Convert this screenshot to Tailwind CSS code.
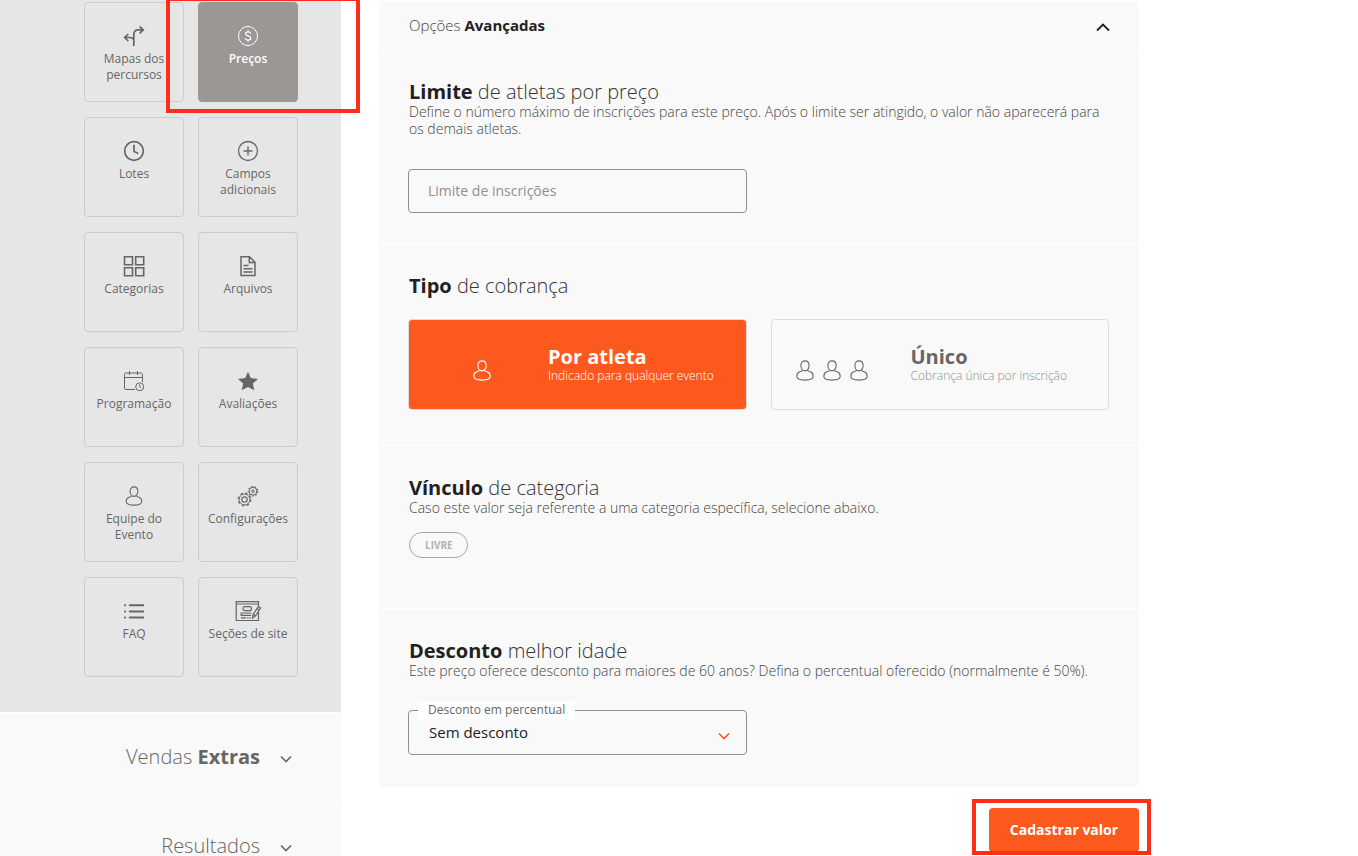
<!DOCTYPE html>
<html lang="pt-BR">
<head>
<meta charset="utf-8">
<meta name="viewport" content="width=device-width, initial-scale=1">
<title>Preços do evento</title>
<script src="https://cdn.jsdelivr.net/npm/@tailwindcss/browser@4"></script>
</head>
<body class="bg-white font-['Open_Sans',sans-serif] text-[#212121]">
<svg class="hidden" aria-hidden="true">
  <symbol id="person" viewBox="0 0 18 21">
    <g fill="none" stroke="currentColor" stroke-width="1.100">
      <path d="M9 .9c2.500 0 4.100 1.800 4.100 4.600 0 3-1.800 5.400-4.100 5.400S4.900 8.500 4.900 5.500C4.900 2.700 6.500.9 9 .9z"/>
      <path d="M6.600 10.200c-.5.9-1.500 1.200-2.800 1.600C1.700 12.500.8 14 .8 16.300c0 2.600 3.200 3.800 8.200 3.800s8.200-1.200 8.200-3.800c0-2.300-.9-3.800-3-4.500-1.300-.4-2.300-.7-2.800-1.600"/>
    </g>
  </symbol>
  <symbol id="chevron" viewBox="0 0 12 8">
    <path d="M1 1.500l5 5 5-5" fill="none" stroke="currentColor" stroke-width="1.600"/>
  </symbol>
</svg>
<div class="flex h-screen items-start overflow-hidden">
  <aside class="w-[341px] shrink-0">
    <nav class="grid grid-cols-[100px_100px] justify-end gap-x-3.5 gap-y-[15px] bg-[#e6e6e6] pt-0.5 pr-[43px] pb-[35px] text-center text-xs leading-4 text-[#666]">
      <a href="#" class="flex h-[100px] flex-col items-center gap-[5px] rounded border border-[#ccc] pt-[23px]">
        <svg class="size-5 shrink-0 overflow-visible" viewBox="0 0 20 20" fill="none" stroke="currentColor" stroke-width="1.700"><path d="M9.800 20V8.500c0-3 1.500-4.600 4.500-4.600h5M15.600.5l3.700 3.400-3.700 3.500M9.800 13.800c-.5-1.600-1.800-2.300-4-2.300H.8M4.300 8L.6 11.500 4.300 15"/></svg>
        <span>Mapas dos<br>percursos</span>
      </a>
      <a href="#" aria-current="page" class="relative flex h-[100px] flex-col items-center gap-[5px] rounded border border-[#9a9795] bg-[#9a9795] pt-[23px] font-semibold text-white">
        <svg class="size-5 shrink-0 overflow-visible" viewBox="0 0 20 20" fill="none" stroke="currentColor"><circle cx="10" cy="10" r="9.500"/><path stroke-width="1.200" d="M12.700 7.600C12.500 6.500 11.500 5.900 10.100 5.900c-1.500 0-2.600.7-2.600 1.900 0 1.300 1.200 1.700 2.600 2.100 1.500.4 2.700.9 2.700 2.200s-1.200 2-2.700 2-2.700-.7-2.800-1.900M10.100 4.300v1.600M10.100 14.100v1.600"/></svg>
        <span>Preços</span>
        <span class="pointer-events-none absolute -top-1.5 -left-[33px] z-10 h-[116px] w-[194px] border-4 border-[#ff2d1c]"></span>
      </a>
      <a href="#" class="flex h-[100px] flex-col items-center gap-[5px] rounded border border-[#ccc] pt-[23px]">
        <svg class="size-5 shrink-0 overflow-visible" viewBox="0 0 20 20" fill="none" stroke="currentColor" stroke-width="1.700"><circle cx="10" cy="10" r="9.300"/><path d="M10 3.800v6.600l4.300 2.100"/></svg>
        <span>Lotes</span>
      </a>
      <a href="#" class="flex h-[100px] flex-col items-center gap-[5px] rounded border border-[#ccc] pt-[23px]">
        <svg class="size-5 shrink-0 overflow-visible" viewBox="0 0 20 20" fill="none" stroke="currentColor" stroke-width="1.300"><circle cx="10" cy="10" r="9.500"/><path d="M5.600 10h8.800M10 5.600v8.800"/></svg>
        <span>Campos<br>adicionais</span>
      </a>
      <a href="#" class="flex h-[100px] flex-col items-center gap-[5px] rounded border border-[#ccc] pt-[23px]">
        <svg class="size-5 shrink-0 overflow-visible" viewBox="0 0 20 20" fill="none" stroke="currentColor" stroke-width="1.600"><path d="M.5.700h8v8h-8zM11.700.700h8v8h-8zM.5 11.700h8v8h-8zM11.700 11.700h8v8h-8z"/></svg>
        <span>Categorias</span>
      </a>
      <a href="#" class="flex h-[100px] flex-col items-center gap-[5px] rounded border border-[#ccc] pt-[23px]">
        <svg class="size-5 shrink-0 overflow-visible" viewBox="0 0 20 20" fill="none" stroke="currentColor" stroke-width="1.500"><path d="M3 .7h8.500l5.500 5.500v13.300H3zM11.300.7v5.700H17M5.500 9.500h5M5.500 12.800h9M5.500 16h9"/></svg>
        <span>Arquivos</span>
      </a>
      <a href="#" class="flex h-[100px] flex-col items-center gap-[5px] rounded border border-[#ccc] pt-[23px]">
        <svg class="size-5 shrink-0 overflow-visible" viewBox="0 0 20 20" fill="none" stroke="currentColor"><path d="M11 18.500H2A1.500 1.500 0 0 1 .5 17V3.500A1.500 1.500 0 0 1 2 2h15a1.500 1.500 0 0 1 1.500 1.500V11M.5 6.500h18M5.500 0v4M13.500 0v4"/><circle cx="15.700" cy="15.800" r="4"/><path d="M15.700 13.300v2.600l1.300 1.200"/></svg>
        <span>Programação</span>
      </a>
      <a href="#" class="flex h-[100px] flex-col items-center gap-[5px] rounded border border-[#ccc] pt-[23px]">
        <svg class="size-5 shrink-0 overflow-visible" viewBox="0 0 20 20" fill="currentColor"><path d="M10 .8l2.800 6.300 7.200.8-5.200 4.700 1.500 6.700L10 16l-6.300 3.300 1.500-6.700L0 7.900l7.200-.8z"/></svg>
        <span>Avaliações</span>
      </a>
      <a href="#" class="flex h-[100px] flex-col items-center gap-[5px] rounded border border-[#ccc] pt-[23px]">
        <svg class="h-5 w-[18px] shrink-0 overflow-visible"><use href="#person"/></svg>
        <span>Equipe do<br>Evento</span>
      </a>
      <a href="#" class="flex h-[100px] flex-col items-center gap-[5px] rounded border border-[#ccc] pt-[23px]">
        <svg class="size-5 shrink-0 overflow-visible" viewBox="0 0 20 20" fill="none" stroke="currentColor"><circle cx="6.500" cy="13.500" r="2.700" stroke-width="1.200"/><circle cx="6.500" cy="13.500" r="5.400"/><circle cx="6.500" cy="13.500" r="6.300" stroke-width="1.300" stroke-dasharray="2.470 2.470"/><circle cx="15" cy="5.200" r="1.300"/><circle cx="15" cy="5.200" r="3.900"/><circle cx="15" cy="5.200" r="4.700" stroke-width="1.100" stroke-dasharray="1.640 1.640"/></svg>
        <span>Configurações</span>
      </a>
      <a href="#" class="flex h-[100px] flex-col items-center gap-[5px] rounded border border-[#ccc] pt-[23px]">
        <svg class="size-5 shrink-0 overflow-visible" viewBox="0 0 20 20" fill="none" stroke="currentColor" stroke-width="2.100" stroke-linecap="round"><path d="M5.800 4.200h13.400M5.800 10.500h13.400M5.800 16.500h13.400M1 4.200h.1M1 10.500h.1M1 16.500h.1"/></svg>
        <span>FAQ</span>
      </a>
      <a href="#" class="flex h-[100px] flex-col items-center gap-[5px] rounded border border-[#ccc] pt-[23px]">
        <svg class="h-5 w-6 shrink-0 overflow-visible" viewBox="0 0 24 20" fill="none" stroke="currentColor" stroke-width="1.200"><path d="M22.500 5V.7H.2v18.800h22.300V11M.2 3h22.300"/><rect x="7" y="5.700" width="8.500" height="4" rx="2"/><path d="M15.500 12H5.200v2.300h10M5 16.900h5M11 16.900h1.500M13.500 16.900h1.500M16.500 17.200l.7-3.900 5.200-8 2.200 1.500-5 8.100zM17.200 13.300l2.400 1.600M20.900 7.600l2.200 1.500"/></svg>
        <span>Seções de site</span>
      </a>
    </nav>
    <button type="button" class="mt-px flex h-[88px] w-full items-center justify-end gap-5 bg-[#f9f9f9] pr-[49px] text-xl text-[#666]">
      <span><span class="font-light">Vendas</span> <b>Extras</b></span>
      <svg class="mt-1 h-2 w-3"><use href="#chevron"/></svg>
    </button>
    <button type="button" class="mt-px flex h-[88px] w-full items-center justify-end gap-5 bg-[#f9f9f9] pr-[49px] text-xl text-[#666]">
      <span class="font-light">Resultados</span>
      <svg class="mt-1 h-2 w-3"><use href="#chevron"/></svg>
    </button>
  </aside>

  <main class="ml-[38px] max-w-[760px] flex-1 pt-px">
    <form class="flex flex-col" onsubmit="return false">
      <div class="flex flex-col gap-px overflow-hidden rounded">
        <button type="button" class="flex h-12 items-center justify-between bg-[#f9f9f9] pr-[29px] pl-[30px] text-[15px]">
          <span><span class="font-light text-[#444]">Opções</span> <b class="font-bold">Avançadas</b></span>
          <svg class="mt-1 h-2 w-3.5 overflow-visible" viewBox="0 0 14 8" fill="none" stroke="#212121" stroke-width="1.800"><path d="M1 7.500l6-6 6 6"/></svg>
        </button>

        <section class="bg-[#f9f9f9] pt-[31px] pr-[30px] pb-[30px] pl-[29px]">
          <h2 class="pl-px text-xl leading-[22px] font-light text-[#333]"><b class="font-bold text-[#212121]">Limite</b> de atletas por preço</h2>
          <p class="pl-px text-sm leading-[17px] font-light text-[#444]">Define o número máximo de inscrições para este preço. Após o limite ser atingido, o valor não aparecerá para os demais atletas.</p>
          <div class="mt-8 grid grid-cols-2 gap-6">
            <input type="text" aria-label="Limite de inscrições" placeholder="Limite de inscrições" class="h-11 w-full rounded border border-[#8f8f8f] bg-transparent px-[19px] pb-0.5 text-sm placeholder:text-[#8f8f8f]">
          </div>
        </section>

        <section class="bg-[#f9f9f9] pt-[31px] pr-[30px] pb-[35px] pl-[29px]">
          <h2 class="pl-px text-xl leading-[22px] font-light text-[#333]"><b class="font-bold text-[#212121]">Tipo</b> de cobrança</h2>
          <div class="mt-[22px] grid grid-cols-2 gap-6">
            <label class="relative flex h-[91px] items-start rounded border border-[#ddd] bg-[#fd591e] text-white">
              <input type="radio" name="cobranca" checked class="sr-only">
              <span class="flex w-[139px] shrink-0 gap-[9px] pt-10 pl-16">
                <svg class="h-[21px] w-[18px]"><use href="#person"/></svg>
              </span>
              <span class="flex flex-col pt-[26px]">
                <b class="text-xl leading-[22px]">Por atleta</b>
                <span class="text-xs leading-4 font-light">Indicado para qualquer evento</span>
              </span>
            </label>
            <label class="relative flex h-[91px] items-start rounded border border-[#ddd] text-[#666]">
              <input type="radio" name="cobranca" class="sr-only">
              <span class="flex w-[139px] shrink-0 gap-[9px] pt-10 pl-6">
                <svg class="h-[21px] w-[18px]"><use href="#person"/></svg>
                <svg class="h-[21px] w-[18px]"><use href="#person"/></svg>
                <svg class="h-[21px] w-[18px]"><use href="#person"/></svg>
              </span>
              <span class="flex flex-col pt-[26px]">
                <b class="text-xl leading-[22px]">Único</b>
                <span class="text-xs leading-4 font-light text-[#8f8f8f]">Cobrança única por inscrição</span>
              </span>
            </label>
          </div>
        </section>

        <section class="bg-[#f9f9f9] pt-[31px] pr-[30px] pb-[50px] pl-[29px]">
          <h2 class="pl-px text-xl leading-[22px] font-light text-[#333]"><b class="font-bold text-[#212121]">Vínculo</b> de categoria</h2>
          <p class="pl-px text-sm leading-[17px] font-light text-[#444]">Caso este valor seja referente a uma categoria específica, selecione abaixo.</p>
          <div class="mt-4 flex pl-px">
            <button type="button" class="h-[26px] rounded-full border border-[#a8a8a8] pr-3.5 pl-[15px] text-[10px] font-bold text-[#b2b2b2]">LIVRE</button>
          </div>
        </section>

        <section class="bg-[#f9f9f9] pt-[31px] pr-[30px] pb-8 pl-[29px]">
          <h2 class="pl-px text-xl leading-[22px] font-light text-[#333]"><b class="font-bold text-[#212121]">Desconto</b> melhor idade</h2>
          <p class="pl-px text-sm leading-[17px] font-light text-[#444]">Este preço oferece desconto para maiores de 60 anos? Defina o percentual oferecido (normalmente é 50%).</p>
          <div class="mt-[31px] grid grid-cols-2 gap-6">
            <div class="relative">
              <select id="desconto" class="h-[45px] w-full appearance-none rounded border border-[#8f8f8f] bg-transparent px-5 text-[15px]">
                <option>Sem desconto</option>
              </select>
              <label for="desconto" class="absolute -top-[9px] left-2.5 bg-white px-2.5 text-xs leading-[18px] text-[#666]">Desconto em percentual</label>
              <svg class="pointer-events-none absolute top-[22px] right-[17px] h-2 w-3 text-[#fd591e]"><use href="#chevron"/></svg>
            </div>
          </div>
        </section>
      </div>

      <div class="relative mt-[21px] self-end">
        <button type="submit" class="h-11 w-[150px] rounded bg-[#fd591e] text-sm font-bold text-white">Cadastrar valor</button>
        <span class="pointer-events-none absolute -top-[9px] -left-[17px] h-14 w-[179px] border-4 border-[#ff2d1c]"></span>
      </div>
    </form>
  </main>
</div>
</body>
</html>
